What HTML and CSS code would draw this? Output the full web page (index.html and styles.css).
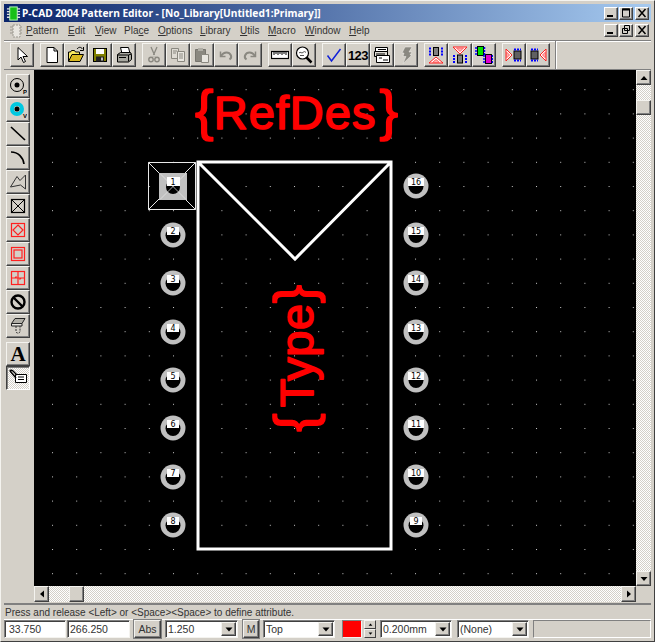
FILE: index.html
```html
<!DOCTYPE html>
<html lang="en">
<head>
<meta charset="utf-8">
<title>P-CAD 2004 Pattern Editor</title>
<link rel="stylesheet" href="styles.css">
</head>
<body>
<div class="window">
  <div class="titlebar">
    <svg class="appicon" viewBox="0 0 16 16"><rect x="4" y="1" width="8" height="14" fill="#18c018" stroke="#c0ffc0"/><path d="M1 3h3M1 6h3M1 9h3M1 12h3M12 3h3M12 6h3M12 9h3M12 12h3" stroke="#e0e0e0" stroke-width="1.4"/></svg>
    <span class="title">P-CAD 2004 Pattern Editor - [No_Library[Untitled1:Primary]]</span>
    <div class="caps">
      <button class="cap"><svg viewBox="0 0 12 10"><path d="M2 8h6" stroke="#000" stroke-width="2"/></svg></button>
      <button class="cap"><svg viewBox="0 0 12 10"><path d="M2.500 1v8h7V1z" fill="none" stroke="#000"/><path d="M2 1.500h8" stroke="#000" stroke-width="2"/></svg></button>
      <button class="cap cap-gap"><svg viewBox="0 0 12 10"><path d="M2.500 1l7 8M9.500 1l-7 8" stroke="#000" stroke-width="1.500"/></svg></button>
    </div>
  </div>
  <div class="menubar">
    <svg class="docicon" viewBox="0 0 14 14"><path d="M4 1h7v12H4z" fill="#e8e6e0" stroke="#9a978e" stroke-dasharray="2 1"/><path d="M1 3h3M1 6h3M1 9h3M11 3h2M11 6h2M11 9h2" stroke="#9a978e"/></svg>
    <nav class="menus">
      <span class="m m1"><u>P</u>attern</span>
      <span class="m m2"><u>E</u>dit</span>
      <span class="m m3"><u>V</u>iew</span>
      <span class="m m4">Pla<u>c</u>e</span>
      <span class="m m5"><u>O</u>ptions</span>
      <span class="m m6"><u>L</u>ibrary</span>
      <span class="m m7"><u>U</u>tils</span>
      <span class="m m8"><u>M</u>acro</span>
      <span class="m m9"><u>W</u>indow</span>
      <span class="m m10"><u>H</u>elp</span>
    </nav>
    <div class="caps mdi">
      <button class="cap"><svg viewBox="0 0 12 10"><path d="M2 8h6" stroke="#000" stroke-width="2"/></svg></button>
      <button class="cap"><svg viewBox="0 0 12 10"><path d="M4.500 .5h5v5H4.500zM2.500 3.500h5v5h-5z" fill="#d4d0c8" stroke="#000"/></svg></button>
      <button class="cap cap-gap"><svg viewBox="0 0 12 10"><path d="M2.500 1l7 8M9.500 1l-7 8" stroke="#000" stroke-width="1.500"/></svg></button>
    </div>
  </div>
  <div class="toolbar">
    <div class="tgroup">
      <button class="btn"><svg viewBox="0 0 18 18"><path d="M5 1.500v12.500l3-3 2.500 5.500 2-1-2.500-5h4.500z" fill="#fff" stroke="#000"/></svg></button>
    </div>
    <div class="tgroup">
      <button class="btn"><svg viewBox="0 0 18 18"><path d="M4 1.500h7l3.500 3.500v11.500H4z" fill="#fff" stroke="#000"/><path d="M11 1.500v3.500h3.500" fill="none" stroke="#000"/></svg></button>
      <button class="btn"><svg viewBox="0 0 18 18"><path d="M1.500 15V6h2l1-1.500h3l1 1.500h4v2" fill="#f8e860" stroke="#000"/><path d="M1.500 15.500h11.500l3.500-7H5z" fill="#d8b820" stroke="#000"/><path d="M10 3c2-2.500 4-2 5.500 0" fill="none" stroke="#000"/><path d="M16.500 1v3.500H13" fill="none" stroke="#000"/></svg></button>
      <button class="btn"><svg viewBox="0 0 18 18"><rect x="2.500" y="2.500" width="13" height="13" fill="#808000" stroke="#000"/><rect x="5" y="3" width="8" height="5" fill="#fff"/><rect x="5" y="10.500" width="8" height="5" fill="#222"/><rect x="10" y="11.500" width="2" height="3" fill="#c0c0c0"/></svg></button>
      <button class="btn"><svg viewBox="0 0 18 18"><path d="M5.500 1.500h8l1.500 6H7z" fill="#fff" stroke="#000"/><path d="M2.500 8.500l3-2h10l1 2v5l-3 2.500h-11z" fill="#a8a8a0" stroke="#000"/><path d="M2.500 9h11v6.500M13.500 9l3-1" fill="none" stroke="#000"/><path d="M4 11.500h7" stroke="#000"/></svg></button>
    </div>
    <div class="tgroup">
      <button class="btn"><svg viewBox="0 0 18 18"><path d="M6 1l3.500 8M12 1L8.500 9" stroke="#8a8880" stroke-width="1.300"/><circle cx="6" cy="13.500" r="2.200" fill="none" stroke="#8a8880" stroke-width="1.400"/><circle cx="12" cy="13.500" r="2.200" fill="none" stroke="#8a8880" stroke-width="1.400"/><path d="M8 10.500l-1 1M10 10.500l1 1" stroke="#8a8880"/></svg></button>
      <button class="btn"><svg viewBox="0 0 18 18"><path d="M2.500 2.500h7v10h-7z" fill="#dedbd4" stroke="#8a8880"/><path d="M8.500 5.500h7v10h-7z" fill="#e8e6e0" stroke="#8a8880"/><path d="M4 5h4M4 7h3M10 8h4M10 10h4M10 12h4" stroke="#8a8880"/></svg></button>
      <button class="btn"><svg viewBox="0 0 18 18"><path d="M2.500 3.500h10v12h-10z" fill="#8a8880" stroke="#77756e"/><rect x="5" y="2" width="5" height="3" fill="#b0aea6"/><path d="M8.500 8.500h7v8h-7z" fill="#e8e6e0" stroke="#8a8880"/></svg></button>
      <button class="btn"><svg viewBox="0 0 18 18"><path d="M3.500 5.500v5h5" fill="none" stroke="#8a8880" stroke-width="1.500"/><path d="M4 10c3-4.500 8-4.500 10 -.5 .5 1.500 0 3-1.500 4" fill="none" stroke="#8a8880" stroke-width="2"/></svg></button>
      <button class="btn"><svg viewBox="0 0 18 18"><path d="M14.500 5.500v5h-5" fill="none" stroke="#8a8880" stroke-width="1.500"/><path d="M14 10c-3-4.500-8-4.500-10-.5-.5 1.500 0 3 1.500 4" fill="none" stroke="#8a8880" stroke-width="2"/></svg></button>
    </div>
    <div class="tgroup">
      <button class="btn"><svg viewBox="0 0 18 18"><rect x=".5" y="5.500" width="17" height="7" fill="#fff" stroke="#000" stroke-width="1.200"/><path d="M3 6v3M5 6v2M7 6v3M9 6v2M11 6v3M13 6v2M15 6v3" stroke="#000"/></svg></button>
      <button class="btn"><svg viewBox="0 0 18 18"><circle cx="7.500" cy="7" r="6" fill="#fff" stroke="#000" stroke-width="1.200"/><path d="M4 7c1.500-2 2.500 1 4-.5s1.500-1 3 0M5 9.500h4" fill="none" stroke="#555"/><path d="M11.500 11.500l5 5" stroke="#000" stroke-width="2.500"/></svg></button>
    </div>
    <div class="tgroup">
      <button class="btn"><svg viewBox="0 0 18 18"><path d="M2.500 9.500l4 5.500L15.500 3" fill="none" stroke="#1020d8" stroke-width="1.500"/></svg></button>
      <button class="btn"><span class="num">123</span></button>
      <button class="btn"><svg viewBox="0 0 18 18"><path d="M2.500 1.500h12v6h-12z" fill="#fff" stroke="#000"/><path d="M1.500 5.500h13v5h-13z" fill="#dedbd4" stroke="#000"/><path d="M3.500 9.500h13v7h-13z" fill="#fff" stroke="#000"/><path d="M5 3.500h8M3 8h9M6 12h3M10 14h5" stroke="#000"/></svg></button>
      <button class="btn"><svg viewBox="0 0 18 18"><path d="M8 1h7l-3 5h3l-2 3h2L6 17.500l3-7H6l1-3.500H5z" fill="#8a8880" stroke="#f4f3ef" stroke-width=".5"/></svg></button>
    </div>
    <div class="tgroup">
      <button class="btn"><svg viewBox="0 0 18 18"><rect x="6.500" y="1.500" width="5" height="8" fill="#808080" stroke="#000"/><path d="M3 1.500v8M15 1.500v8" stroke="#0000ff" stroke-width="2" stroke-dasharray="2 1"/><path d="M9 11l7 6H2z" fill="#fff" stroke="#ff2020"/><path d="M9 13.500l3.500 3h-7z" fill="#ffb0b0" stroke="#ff6060"/></svg></button>
      <button class="btn"><svg viewBox="0 0 18 18"><path d="M9 8L2 1h14z" fill="#fff" stroke="#ff2020"/><path d="M9 5.500L5.500 2h7z" fill="#ffb0b0" stroke="#ff6060"/><rect x="6.500" y="9" width="5" height="8" fill="#808080" stroke="#000"/><path d="M3 9v8M15 9v8" stroke="#0000ff" stroke-width="2" stroke-dasharray="2 1"/></svg></button>
      <button class="btn"><svg viewBox="0 0 18 18"><rect x="2.500" y=".5" width="6" height="9" fill="#00e000" stroke="#000"/><rect x="10.500" y="8.500" width="6" height="9" fill="#e000d0" stroke="#000"/><path d="M1 1v9M9.500 1v8M9 9v9M17.500 9v9" stroke="#0000ff" stroke-width="1.500" stroke-dasharray="2 1"/></svg></button>
    </div>
    <div class="tgroup">
      <button class="btn"><svg viewBox="0 0 18 18"><path d="M1 3l6 6-6 6z" fill="#fff" stroke="#ff2020"/><path d="M1.500 6l3 3-3 3z" fill="#ffb0b0" stroke="#ff6060"/><rect x="9" y="5" width="7" height="8" fill="#606060" stroke="#000"/><path d="M9 3.500h7M9 14.500h7" stroke="#0000ff" stroke-width="2" stroke-dasharray="2 1"/></svg></button>
      <button class="btn"><svg viewBox="0 0 18 18"><path d="M17 3l-6 6 6 6z" fill="#fff" stroke="#ff2020"/><path d="M16.500 6l-3 3 3 3z" fill="#ffb0b0" stroke="#ff6060"/><rect x="2" y="5" width="7" height="8" fill="#606060" stroke="#000"/><path d="M2 3.500h7M2 14.500h7" stroke="#0000ff" stroke-width="2" stroke-dasharray="2 1"/></svg></button>
    </div>
    <div class="tsep"></div>
  </div>
  <div class="main">
    <aside class="side">
      <div class="sgroup">
        <button class="btn"><svg viewBox="0 0 18 18"><circle cx="8" cy="8" r="6.500" fill="none" stroke="#000"/><circle cx="8" cy="8" r="2.500"/><text class="sub" x="14" y="17">P</text></svg></button>
        <button class="btn"><svg viewBox="0 0 18 18"><circle cx="8" cy="8" r="5" fill="none" stroke="#00c8e0" stroke-width="4"/><circle cx="8" cy="8" r="2.500"/><text class="sub" x="14" y="17">V</text></svg></button>
        <button class="btn"><svg viewBox="0 0 18 18"><path d="M2 2l14 13" stroke="#000" stroke-width="1.700"/></svg></button>
        <button class="btn"><svg viewBox="0 0 18 18"><path d="M2 3c7 0 12 5 13 12" fill="none" stroke="#000" stroke-width="1.700"/></svg></button>
        <button class="btn"><svg viewBox="0 0 18 18"><path d="M1.500 14L8 3.500l3 4 5.500-5.500v14l-5-4z" fill="none" stroke="#333"/></svg></button>
        <button class="btn"><svg viewBox="0 0 18 18"><rect x="2.500" y="2.500" width="13" height="13" fill="none" stroke="#000" stroke-width="1.200"/><path d="M2.500 2.500l13 13M15.500 2.500l-13 13" stroke="#000"/></svg></button>
        <button class="btn"><svg viewBox="0 0 18 18"><rect x="2.500" y="2.500" width="13" height="13" fill="none" stroke="#ff2020" stroke-width="1.200"/><path d="M9 4l5 5-5 5-5-5z" fill="none" stroke="#ff2020" stroke-width="1.200"/></svg></button>
        <button class="btn"><svg viewBox="0 0 18 18"><rect x="2.500" y="2.500" width="13" height="13" fill="none" stroke="#ff2020" stroke-width="1.200"/><rect x="5" y="5" width="8" height="8" fill="none" stroke="#ff2020" stroke-width="1.200"/></svg></button>
        <button class="btn"><svg viewBox="0 0 18 18"><rect x="2.500" y="2.500" width="13" height="13" fill="none" stroke="#ff2020" stroke-width="1.200"/><path d="M9 2v14M2 9h14M6 9l1.500-1.500M12 9l-1.500 1.500" stroke="#ff2020" stroke-width="1.200"/></svg></button>
        <button class="btn"><svg viewBox="0 0 18 18"><circle cx="9" cy="9" r="6.500" fill="none" stroke="#000" stroke-width="2.400"/><path d="M4.500 4.500l9 9" stroke="#000" stroke-width="2.400"/></svg></button>
        <button class="btn"><svg viewBox="0 0 18 18"><path d="M6 1.500h10l-3 5H2.500z" fill="#b0aea6" stroke="#222"/><path d="M2.500 6.500h10.500v2.500H2.500z" fill="#e8e6e0" stroke="#222"/><path d="M7 9v6c1 1.500 3 1.500 4 0V9" fill="none" stroke="#333" stroke-dasharray="2 1"/></svg></button>
      </div>
      <div class="sgroup">
        <button class="btn"><span class="bigA">A</span></button>
        <button class="btn btn-on"><svg viewBox="0 0 18 18"><path d="M6.500 5.500h11v8h-11z" fill="#fff" stroke="#000"/><path d="M9 8h6M9 10.500h6" stroke="#000"/><path d="M1 2c0-1 2-1 3 0l4 4M1 2l6 7" fill="none" stroke="#000" stroke-width="1.400"/></svg></button>
      </div>
    </aside>
    <div class="work">
      <div class="viewrow">
        <svg class="canvas" viewBox="34 70 602 516">
          <defs>
            <pattern id="dots" patternUnits="userSpaceOnUse" x="173" y="186" width="24.2" height="24.2"><rect width="1" height="1" fill="#c8c8c8"/></pattern>
            <g id="pad"><circle r="12.500" fill="#c0c0c0"/><circle r="7.500" cy=".5" fill="#000"/></g>
          </defs>
          <rect x="34" y="70" width="602" height="516" fill="#000"/>
          <rect x="34" y="70" width="602" height="516" fill="url(#dots)"/>

          <text class="des" x="195" y="129"><tspan class="brace">{</tspan><tspan class="wide">RefDes</tspan><tspan class="brace" dx="3">}</tspan></text>

          <path class="outline" d="M198 162H391V549H198ZM198 162L295 259L391 162"/>

          <text class="des" transform="translate(313 432) rotate(-90)"><tspan class="brace">{</tspan><tspan class="mid" dx="6">Type</tspan><tspan class="brace">}</tspan></text>

          <g class="pad1">
            <path d="M148.500 162.500h47v47h-47zM148.500 162.500l47 47M195.500 162.500l-47 47" fill="none" stroke="#e8e8e8"/>
            <rect x="159" y="173" width="28" height="27" fill="#c0c0c0"/>
            <circle cx="173" cy="187" r="7" fill="#000"/>
            <path d="M160 173.500l26 26M186 173.500l-26 26" stroke="#e8e8e8" stroke-width=".7"/>
          </g>
          <use href="#pad" x="173" y="235"/><use href="#pad" x="173" y="283"/><use href="#pad" x="173" y="332"/><use href="#pad" x="173" y="380"/>
          <use href="#pad" x="173" y="428"/><use href="#pad" x="173" y="477"/><use href="#pad" x="173" y="525"/>
          <use href="#pad" x="416" y="186"/><use href="#pad" x="416" y="235"/><use href="#pad" x="416" y="283"/><use href="#pad" x="416" y="332"/>
          <use href="#pad" x="416" y="380"/><use href="#pad" x="416" y="428"/><use href="#pad" x="416" y="477"/><use href="#pad" x="416" y="525"/>

          <g class="plabels">
            <rect x="167" y="177" width="13" height="9"/><rect x="167" y="227" width="12" height="8"/><rect x="167" y="275" width="12" height="8"/><rect x="167" y="324" width="12" height="8"/>
            <rect x="167" y="372" width="12" height="8"/><rect x="167" y="420" width="12" height="8"/><rect x="167" y="469" width="12" height="8"/><rect x="167" y="517" width="12" height="8"/>
            <rect x="408" y="178" width="16" height="8"/><rect x="408" y="227" width="16" height="8"/><rect x="408" y="275" width="16" height="8"/><rect x="408" y="324" width="16" height="8"/>
            <rect x="408" y="372" width="16" height="8"/><rect x="408" y="420" width="16" height="8"/><rect x="408" y="469" width="16" height="8"/><rect x="410" y="517" width="12" height="8"/>
          </g>
          <g class="pnums">
            <text x="173" y="185">1</text><text x="173" y="234">2</text><text x="173" y="282">3</text><text x="173" y="331">4</text>
            <text x="173" y="379">5</text><text x="173" y="427">6</text><text x="173" y="476">7</text><text x="173" y="524">8</text>
            <text x="416" y="185">16</text><text x="416" y="234">15</text><text x="416" y="282">14</text><text x="416" y="331">13</text>
            <text x="416" y="379">12</text><text x="416" y="427">11</text><text x="416" y="476">10</text><text x="416" y="524">9</text>
          </g>
        </svg>
        <div class="vscroll">
          <button class="sb sb-v"><svg viewBox="0 0 8 6"><path d="M4 1l3.500 4H.5z"/></svg></button>
          <div class="vthumbwrap"><button class="sb sb-v"></button></div>
          <button class="sb sb-v sb-end"><svg viewBox="0 0 8 6"><path d="M4 5L.5 1h7z"/></svg></button>
        </div>
      </div>
      <div class="hscroll">
        <button class="sb sb-h"><svg viewBox="0 0 6 8"><path d="M1 4l4-3.500v7z"/></svg></button>
        <div class="hthumbwrap"><button class="sb sb-h"></button></div>
        <button class="sb sb-h sb-end"><svg viewBox="0 0 6 8"><path d="M5 4L1 .5v7z"/></svg></button>
      </div>
    </div>
  </div>
  <div class="status">Press and release &lt;Left&gt; or &lt;Space&gt;&lt;Space&gt; to define attribute.</div>
  <div class="fields">
    <div class="field f1">33.750</div>
    <div class="field f2">266.250</div>
    <button class="fbtn fb1">Abs</button>
    <div class="field combo f3"><span>1.250</span><i class="drop"><svg viewBox="0 0 8 5"><path d="M.5 .5h7L4 4.500z"/></svg></i></div>
    <button class="fbtn fb2">M</button>
    <div class="field combo f4"><span>Top</span><i class="drop"><svg viewBox="0 0 8 5"><path d="M.5 .5h7L4 4.500z"/></svg></i></div>
    <div class="swatch"></div>
    <div class="spin"><i><svg viewBox="0 0 6 4"><path d="M3 .5l2.500 3h-5z"/></svg></i><i><svg viewBox="0 0 6 4"><path d="M3 3.500L.5 .5h5z"/></svg></i></div>
    <div class="field combo f5"><span>0.200mm</span><i class="drop"><svg viewBox="0 0 8 5"><path d="M.5 .5h7L4 4.500z"/></svg></i></div>
    <div class="field combo f6"><span>(None)</span><i class="drop"><svg viewBox="0 0 8 5"><path d="M.5 .5h7L4 4.500z"/></svg></i></div>
    <div class="panel"></div>
  </div>
</div>
</body>
</html>
```

FILE: styles.css
```css
* { box-sizing: border-box; }
html, body { margin: 0; padding: 0; }
body { width: 655px; height: 642px; overflow: hidden; background: #d4d0c8; font-family: "Liberation Sans", sans-serif; font-size: 10px; color: #000; }
button { padding: 0; margin: 0; font: inherit; color: inherit; display: flex; align-items: center; justify-content: center; }
.window { width: 655px; height: 642px; display: flex; flex-direction: column; background: #d4d0c8; border-top: 1px solid #f4f3ef; border-left: 1px solid #f4f3ef; border-right: 1px solid #404040; border-bottom: 1px solid #404040; padding: 3px 3px 2px 3px; }

.titlebar { height: 18px; flex: none; display: flex; align-items: center; background: linear-gradient(90deg, #0a246a, #a6caf0); padding-left: 2px; }
.appicon { width: 15px; height: 15px; flex: none; }
.title { margin-left: 1px; font-family: "Noto Sans", sans-serif; font-weight: 700; font-size: 10.200px; color: #fff; white-space: nowrap; }
.caps { margin-left: auto; display: flex; margin-right: 2px; }
.cap { width: 14px; height: 13px; background: #d4d0c8; border: 1px solid; border-color: #fff #404040 #404040 #fff; box-shadow: inset -1px -1px 0 #808080; margin-left: 1px; }
.cap svg { width: 12px; height: 10px; }
.cap-gap { margin-left: 2px; }

.menubar { height: 17px; flex: none; display: flex; align-items: center; padding-left: 5px; }
.docicon { width: 14px; height: 14px; flex: none; }
.menus { display: flex; flex: none; }
.m { font-size: 10px; color: #333; white-space: nowrap; }
.m1 { margin-left: 3px; width: 42px; }
.m2 { width: 27px; }
.m3 { width: 29px; }
.m4 { width: 34px; }
.m5 { width: 42px; }
.m6 { width: 40px; }
.m7 { width: 28px; }
.m8 { width: 37px; }
.m9 { width: 44px; }
.m10 { width: 30px; }
.mdi { margin-top: -1px; }

.toolbar { height: 30px; flex: none; margin-top: 1px; display: flex; align-items: center; gap: 6px; padding-left: 6px; border-top: 1px solid #808080; border-bottom: 1px solid #808080; box-shadow: inset 0 1px 0 #fff; }
.tgroup { display: flex; flex: none; }
.tsep { width: 2px; height: 28px; border-left: 1px solid #808080; border-right: 1px solid #fff; margin-left: -1px; }
.btn { width: 24px; height: 24px; flex: none; background: #d4d0c8; border: 1px solid; border-color: #f4f3ef #404040 #404040 #f4f3ef; box-shadow: inset -1px -1px 0 #808080; }
.btn svg { width: 18px; height: 18px; display: block; }
.btn-on { border-color: #404040 #fff #fff #404040; box-shadow: inset 1px 1px 0 #808080; background: repeating-conic-gradient(#fff 0 25%, #d4d0c8 0 50%) 0 0 / 2px 2px; }
.num { font-weight: 700; font-size: 13px; letter-spacing: -.5px; }
.bigA { font-family: "Liberation Serif", serif; font-weight: 700; font-size: 21px; line-height: 20px; }
.sub { font-size: 6px; font-weight: 700; }

.main { height: 532px; flex: none; display: flex; }
.side { width: 30px; flex: none; padding: 4px 0 0 2px; display: flex; flex-direction: column; gap: 4px; }
.sgroup { display: flex; flex-direction: column; }
.work { flex: 1; display: flex; flex-direction: column; min-width: 0; }
.viewrow { display: flex; height: 516px; flex: none; }
.canvas { width: 602px; height: 516px; display: block; flex: none; }
.vscroll { width: 15px; flex: none; display: flex; flex-direction: column; background: repeating-conic-gradient(#fff 0 25%, #d4d0c8 0 50%) 0 0 / 2px 2px; }
.hscroll { height: 16px; width: 602px; flex: none; display: flex; background: repeating-conic-gradient(#fff 0 25%, #d4d0c8 0 50%) 0 0 / 2px 2px; }
.sb { background: #d4d0c8; border: 1px solid; border-color: #f4f3ef #404040 #404040 #f4f3ef; box-shadow: inset -1px -1px 0 #808080; flex: none; }
.sb-v { width: 15px; height: 15px; }
.sb-v svg { width: 8px; height: 6px; }
.sb-h { width: 15px; height: 16px; }
.sb-h svg { width: 6px; height: 8px; }
.sb-end { margin-top: auto; }
.hscroll .sb-end { margin-top: 0; margin-left: auto; }
.vthumbwrap { padding-top: 15px; }
.hthumbwrap { padding-left: 20px; }

.des { font-size: 47px; fill: #ff0000; stroke: #ff0000; stroke-width: 1.600px; stroke-linejoin: round; stroke-linecap: round; }
.brace { font-size: 56px; }
.wide { letter-spacing: 1px; }
.mid { letter-spacing: .5px; }
.outline { fill: none; stroke: #fff; stroke-width: 3px; stroke-linejoin: miter; }
.plabels rect { fill: #fff; }
.pnums text { font-family: "DejaVu Sans", sans-serif; font-size: 8px; fill: #000; text-anchor: middle; }

.status { height: 17px; flex: none; margin-top: 1px; border-top: 2px solid #808080; border-bottom: 1px solid #fff; padding: 1px 0 0 1px; font-size: 10px; line-height: 13px; color: #333; white-space: nowrap; }
.fields { height: 19px; flex: none; display: flex; align-items: flex-start; }
.field { height: 18px; flex: none; background: #fff; border: 1px solid; border-color: #808080 #f4f3ef #f4f3ef #808080; box-shadow: inset 1px 1px 0 #404040; padding: 0 0 0 2px; color: #333; font-size: 10.500px; display: flex; align-items: center; white-space: nowrap; }
.f1 { width: 62px; padding-left: 4px; }
.f2 { width: 63px; margin-left: 1px; }
.fbtn { height: 18px; flex: none; background: #d4d0c8; border: 1px solid; border-color: #f4f3ef #404040 #404040 #f4f3ef; box-shadow: inset -1px -1px 0 #808080, 0 0 0 1px #808080; font-size: 10.500px; color: #333; }
.fb1 { width: 27px; margin-left: 4px; }
.fb2 { width: 16px; margin-left: 5px; }
.combo span { flex: 1; }
.drop { width: 15px; height: 14px; flex: none; margin-right: 1px; background: #d4d0c8; border: 1px solid; border-color: #f4f3ef #404040 #404040 #f4f3ef; box-shadow: inset -1px -1px 0 #808080; display: flex; align-items: center; justify-content: center; }
.drop svg { width: 8px; height: 5px; }
.f3 { width: 73px; margin-left: 4px; }
.f4 { width: 72px; margin-left: 4px; }
.swatch { width: 20px; height: 18px; flex: none; margin-left: 7px; background: #ff0000; border: 1px solid; border-color: #808080 #f4f3ef #f4f3ef #808080; }
.spin { width: 12px; height: 18px; flex: none; display: flex; flex-direction: column; margin-left: 2px; }
.spin i { flex: 1; background: #d4d0c8; border: 1px solid; border-color: #f4f3ef #404040 #404040 #f4f3ef; display: flex; align-items: center; justify-content: center; }
.spin svg { width: 5px; height: 3px; }
.f5 { width: 72px; margin-left: 4px; }
.f6 { width: 72px; margin-left: 5px; }
.panel { width: 118px; height: 18px; flex: none; margin-left: 4px; border: 1px solid; border-color: #808080 #fff #fff #808080; }
```
